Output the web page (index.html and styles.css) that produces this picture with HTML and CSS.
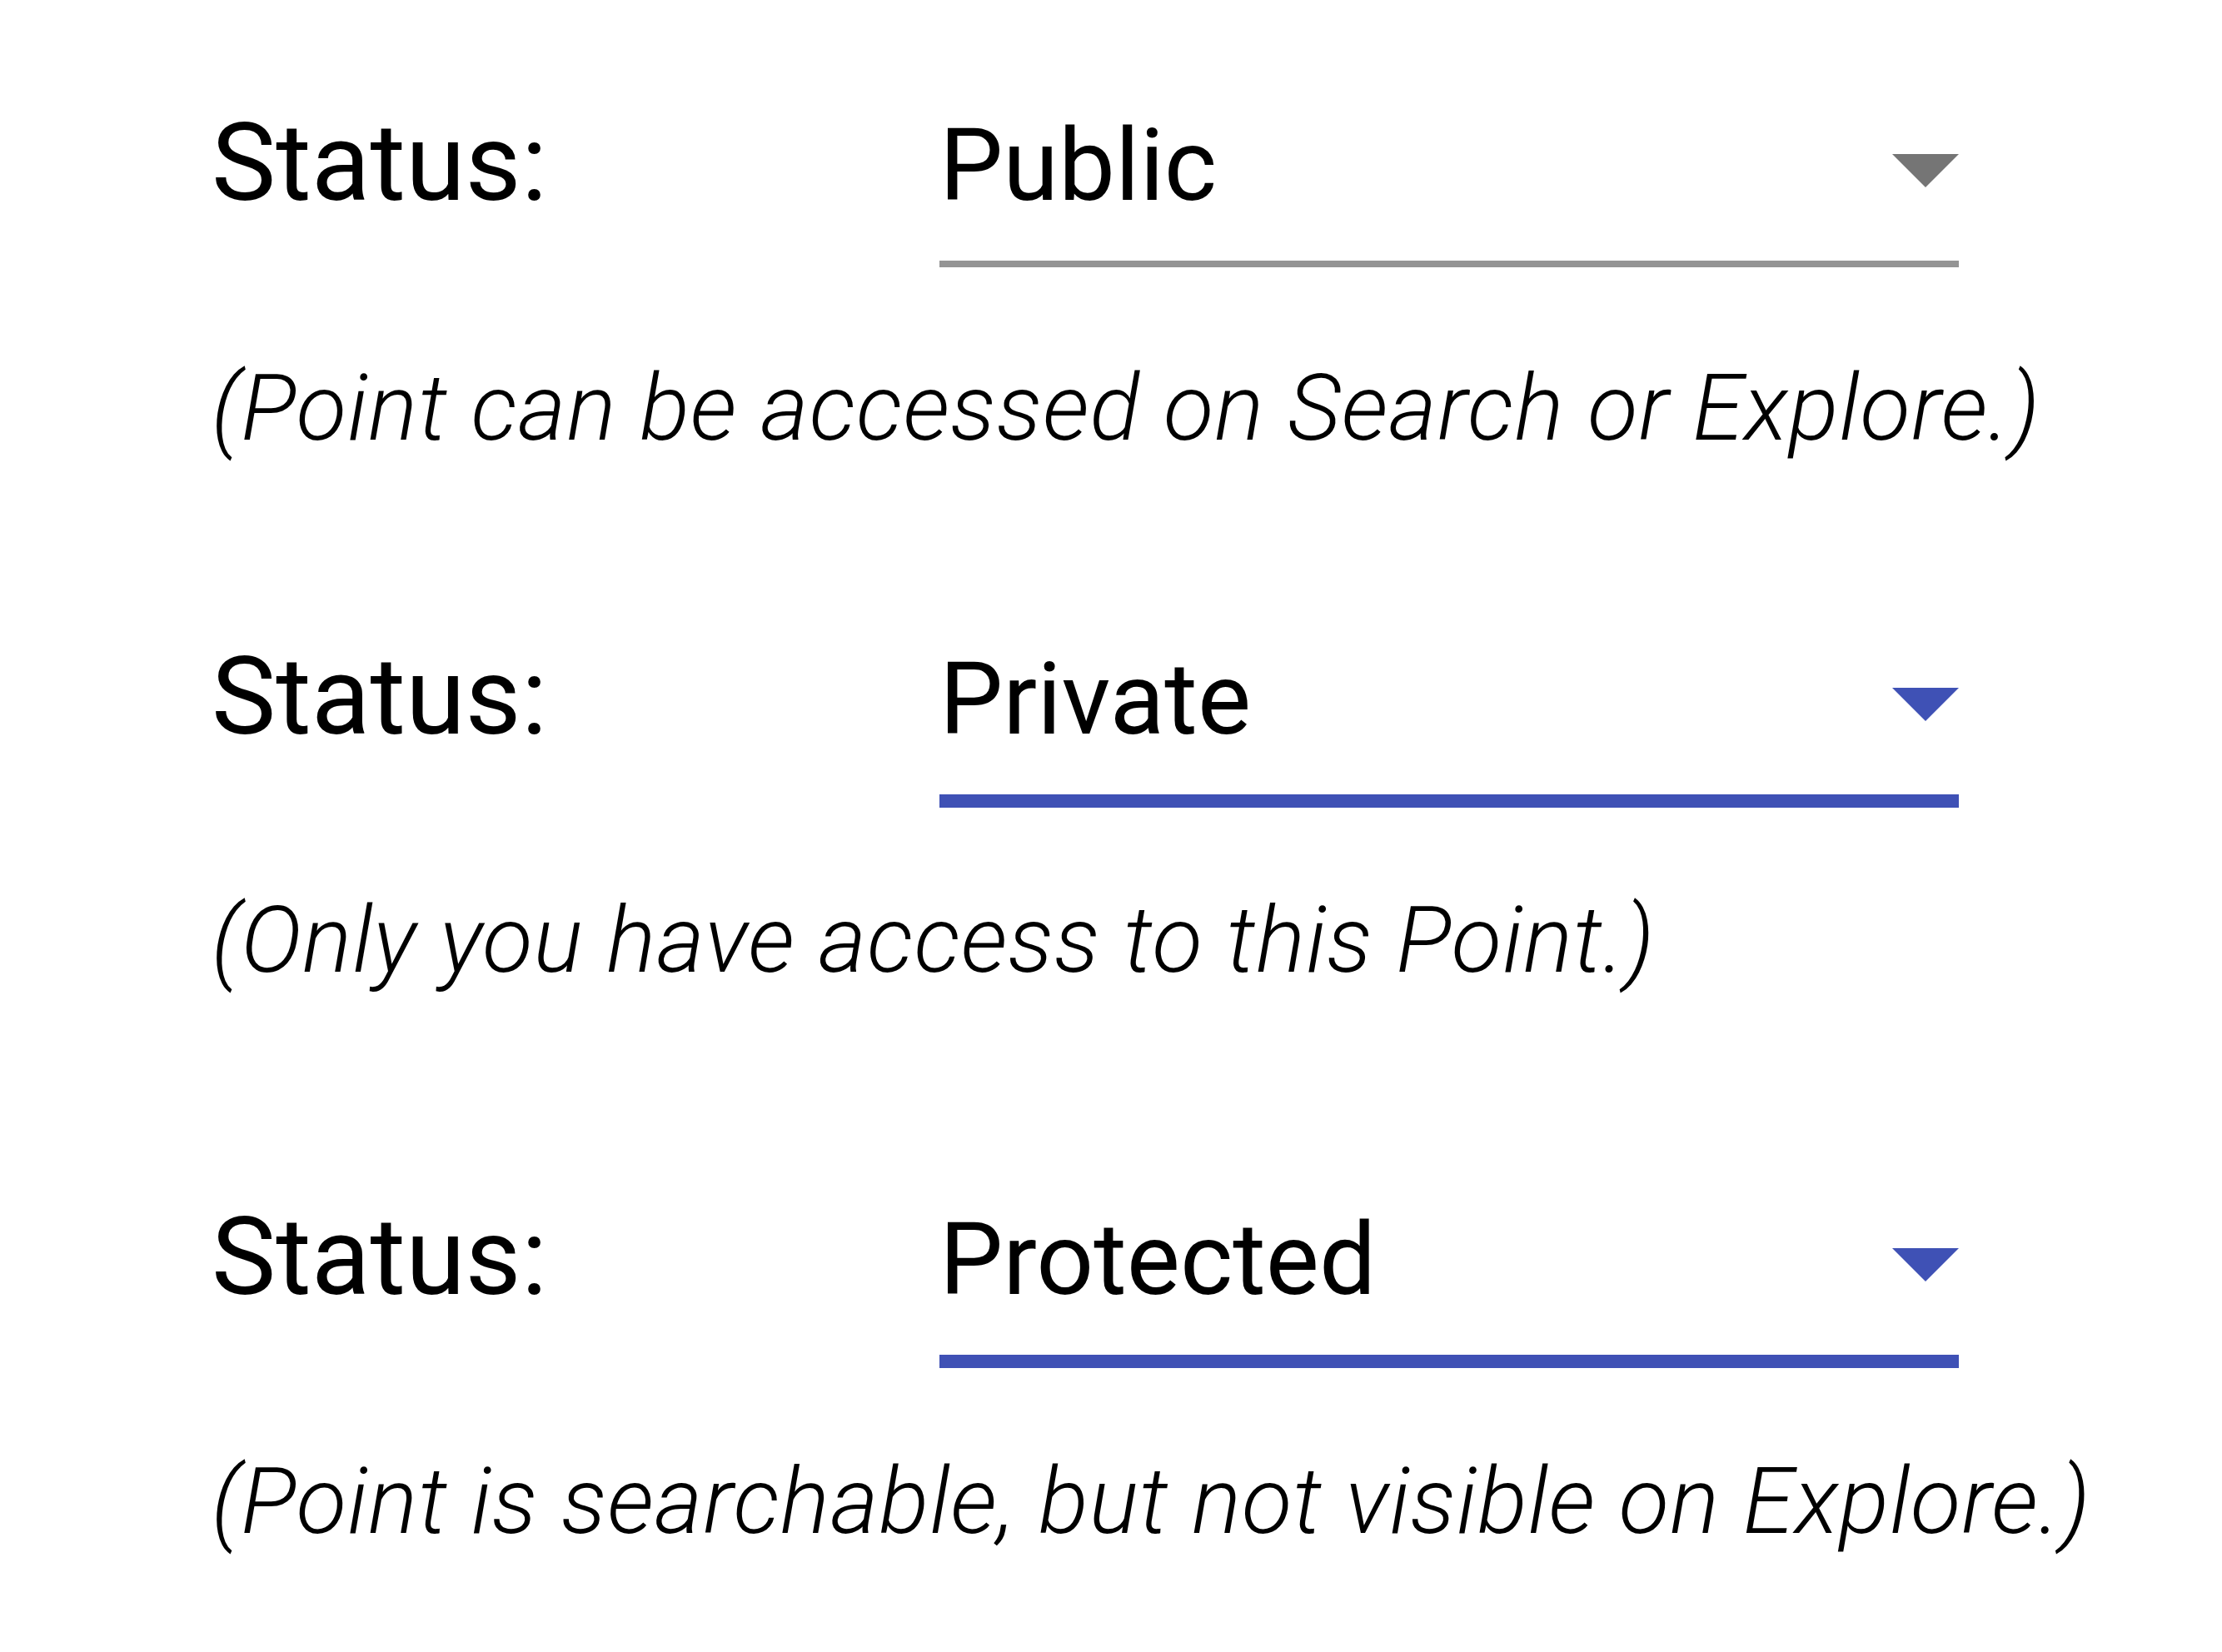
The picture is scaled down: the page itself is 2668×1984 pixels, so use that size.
FILE: index.html
```html
<!DOCTYPE html>
<html lang="en">
<head>
<meta charset="utf-8">
<title>Status</title>
<link rel="stylesheet" href="styles.css">
</head>
<body>
<main class="page">
  <section class="field">
    <div class="field-row">
      <span class="field-label">Status:</span>
      <div class="select">
        <span class="select-value">Public</span>
        <svg class="select-arrow" viewBox="0 0 80 40" aria-hidden="true"><polygon points="0,0 80,0 40,40"/></svg>
      </div>
    </div>
    <p class="field-hint">(Point can be accessed on Search or Explore.)</p>
  </section>
  <section class="field field--second">
    <div class="field-row">
      <span class="field-label">Status:</span>
      <div class="select select--focused">
        <span class="select-value">Private</span>
        <svg class="select-arrow" viewBox="0 0 80 40" aria-hidden="true"><polygon points="0,0 80,0 40,40"/></svg>
      </div>
    </div>
    <p class="field-hint">(Only you have access to this Point.)</p>
  </section>
  <section class="field field--third">
    <div class="field-row">
      <span class="field-label">Status:</span>
      <div class="select select--focused">
        <span class="select-value">Protected</span>
        <svg class="select-arrow" viewBox="0 0 80 40" aria-hidden="true"><polygon points="0,0 80,0 40,40"/></svg>
      </div>
    </div>
    <p class="field-hint">(Point is searchable, but not visible on Explore.)</p>
  </section>
</main>
</body>
</html>
```
FILE: styles.css
```css
html, body {
  margin: 0;
  padding: 0;
  background: #ffffff;
}

body {
  font-family: Roboto, "Liberation Sans", sans-serif;
  color: #000000;
}

.page {
  padding: 123px 0 0 254px;
}

.field-row {
  display: flex;
  align-items: baseline;
}

.field-label {
  flex-shrink: 0;
  width: 874px;
  font-size: 130px;
  line-height: 145px;
}

.select {
  width: 1224px;
  display: flex;
  justify-content: space-between;
  align-items: flex-start;
  padding-bottom: 41px;
  border-bottom: 8px solid #949494;
}

.select-value {
  font-size: 121px;
  line-height: 145px;
}

.select-arrow {
  width: 80px;
  height: 40px;
  margin-top: 58px;
  fill: #757575;
}

.select--focused {
  border-bottom: 16px solid #3f51b5;
}

.select--focused .select-arrow {
  fill: #3f51b5;
}

.field-hint {
  margin: 104px 0 0;
  font-size: 111px;
  line-height: 130px;
  font-style: italic;
  font-weight: 300;
  letter-spacing: 0.9px;
}

.field--second {
  margin-top: 209px;
}

.field--second .field-hint {
  margin-top: 94px;
}

.field--third {
  margin-top: 243px;
}

.field--third .field-hint {
  margin-top: 95px;
}
```
